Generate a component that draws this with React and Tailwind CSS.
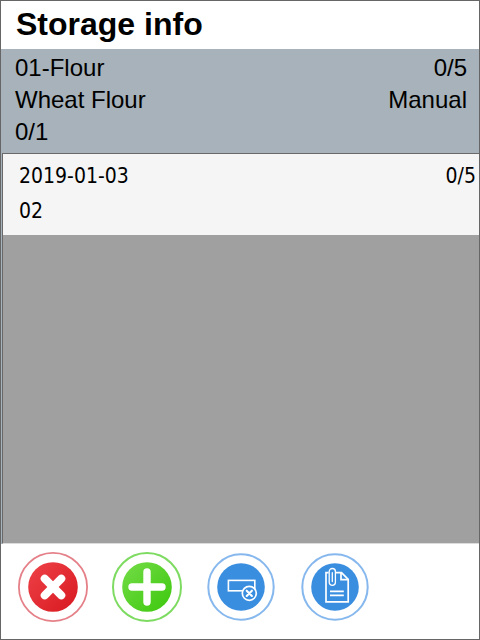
const ringButton = 'block size-[70px] shrink-0 cursor-pointer rounded-full';

function DeleteIcon() {
  return (
    <svg viewBox="0 0 70 70" className="size-full" aria-hidden="true">
      <defs>
        <linearGradient id="red" x1="0" y1="0" x2="1" y2="1">
          <stop offset="0" stopColor="#ee4248" />
          <stop offset="1" stopColor="#d81820" />
        </linearGradient>
      </defs>
      <circle cx="35" cy="35" r="34.1" fill="#fff" stroke="#e58088" strokeWidth="1.8" />
      <circle cx="35" cy="35" r="24.8" fill="url(#red)" />
      <path d="M26.7 26.7 L43.3 43.3 M43.3 26.7 L26.7 43.3" stroke="#fff" strokeWidth="8" strokeLinecap="round" />
    </svg>
  );
}

function AddIcon() {
  return (
    <svg viewBox="0 0 70 70" className="size-full" aria-hidden="true">
      <defs>
        <linearGradient id="green" x1="0" y1="0" x2="1" y2="1">
          <stop offset="0" stopColor="#74dc48" />
          <stop offset="1" stopColor="#3cc80c" />
        </linearGradient>
      </defs>
      <circle cx="35" cy="35" r="34" fill="#fff" stroke="#7edb62" strokeWidth="2" />
      <circle cx="35" cy="35" r="24.8" fill="url(#green)" />
      <path d="M35 20 V50 M20 35 H50" stroke="#fff" strokeWidth="7.4" strokeLinecap="round" />
    </svg>
  );
}

function ClearFieldIcon() {
  return (
    <svg viewBox="0 0 70 70" className="size-full" aria-hidden="true">
      <circle cx="35" cy="35" r="32.7" fill="#fff" stroke="#86b8ee" strokeWidth="2" />
      <circle cx="35" cy="35" r="23.8" fill="#3a8ee0" />
      <rect x="22.4" y="28.4" width="26.4" height="10.4" fill="none" stroke="#fff" strokeWidth="1.6" />
      <circle cx="43.3" cy="41.3" r="7" fill="#3a8ee0" stroke="#fff" strokeWidth="1.7" />
      <path d="M40.7 38.7 L45.9 43.9 M45.9 38.7 L40.7 43.9" stroke="#fff" strokeWidth="2.1" strokeLinecap="round" />
    </svg>
  );
}

function AttachmentIcon() {
  return (
    <svg viewBox="0 0 70 70" className="size-full" aria-hidden="true" fill="none" stroke="#fff" strokeWidth="1.7">
      <circle cx="35" cy="35" r="32.7" fill="#fff" stroke="#86b8ee" strokeWidth="2" />
      <circle cx="35" cy="35" r="23.8" fill="#3a8ee0" stroke="none" />
      <path d="M28.6 20.6 H26 V49.8 H48.2 V27.4 L41.5 20.6 H36" />
      <path d="M41 20.7 V27.6 H48.2" />
      <path d="M30 43.4 H43.8 M30 39.4 H43.8" strokeWidth="1.6" />
      <path
        d="M35.4 21.5 V30.3 A3.1 3.1 0 0 1 29.2 30.3 V19.6 A3.1 3.1 0 0 1 35.4 19.6 V23 M32.3 20.6 V29.6"
        strokeWidth="1.3"
        strokeLinecap="round"
      />
    </svg>
  );
}

const actions = [
  { label: 'Cancel', Icon: DeleteIcon },
  { label: 'Add', Icon: AddIcon },
  { label: 'Clear entry', Icon: ClearFieldIcon },
  { label: 'Attach document', Icon: AttachmentIcon },
];

const batches = [{ date: '2019-01-03', code: '02', count: '0/5' }];

export default function App() {
  return (
    <div className="flex min-h-screen flex-col border border-[#666] bg-white font-['Liberation_Sans',Arial,sans-serif] text-black">
      <header className="h-12 px-[15px]">
        <h1 className="text-[32px] leading-[46px] font-bold">Storage info</h1>
      </header>

      <main className="flex grow flex-col bg-[#a7b2ba]">
        <section className="flex h-26 justify-between px-3 pt-[3px] pl-3.5 text-2xl leading-8">
          <div>
            <p>01-Flour</p>
            <p>Wheat Flour</p>
            <p>0/1</p>
          </div>
          <div className="text-right">
            <p>0/5</p>
            <p>Manual</p>
          </div>
        </section>

        <section className="ml-px grow border-t border-b border-l border-t-[#696969] border-b-[#dcdcdc] border-l-[#696969] bg-[#a0a0a0] font-['DejaVu_Sans_Condensed','DejaVu_Sans',sans-serif]">
          <ul>
            {batches.map((batch) => (
              <li
                key={batch.code}
                className="flex h-[81px] justify-between bg-[#f5f5f5] pt-[5px] pr-[3px] pl-4 text-[21px] leading-[35px]"
              >
                <div>
                  <p>{batch.date}</p>
                  <p>{batch.code}</p>
                </div>
                <p>{batch.count}</p>
              </li>
            ))}
          </ul>
        </section>
      </main>

      <footer className="flex h-[95px] gap-6 px-[17px] pt-2">
        {actions.map(({ label, Icon }) => (
          <button key={label} type="button" aria-label={label} className={ringButton}>
            <Icon />
          </button>
        ))}
      </footer>
    </div>
  );
}
